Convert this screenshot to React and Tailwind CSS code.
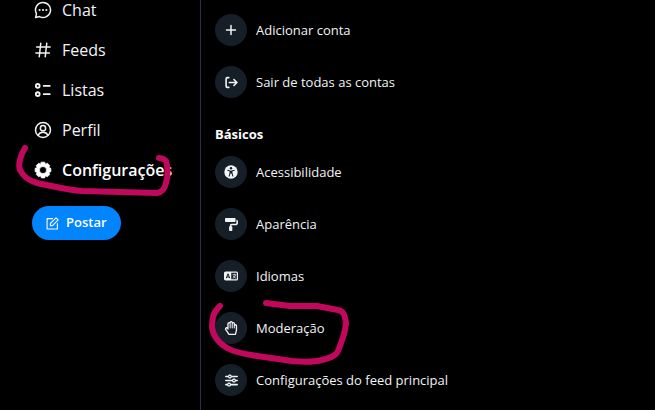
import React from 'react';
import { FaPaintRoller, FaRegHandPaper } from 'react-icons/fa';
import { FaSliders } from 'react-icons/fa6';

// ── Icons ───────────────────────────────────────────────────────────────────

function Icon({ className = 'size-[18px]', strokeWidth = 2, children }) {
  return (
    <svg
      viewBox="0 0 24 24"
      className={`shrink-0 ${className}`}
      fill="none"
      stroke="currentColor"
      strokeWidth={strokeWidth}
      strokeLinecap="round"
      strokeLinejoin="round"
      aria-hidden="true"
    >
      {children}
    </svg>
  );
}

const ChatIcon = () => (
  <Icon>
    <path d="M12 2a10 10 0 1 1-4.7 18.8L2.2 22l1.1-5.1A10 10 0 0 1 12 2Z" />
    <g fill="currentColor" stroke="none">
      <circle cx="7.5" cy="12" r="1.4" />
      <circle cx="12" cy="12" r="1.4" />
      <circle cx="16.5" cy="12" r="1.4" />
    </g>
  </Icon>
);

const HashIcon = () => (
  <Icon>
    <path d="M9 3 7 21M17 3l-2 18M3.5 8h18M2.5 16h18" />
  </Icon>
);

const ListIcon = () => (
  <Icon strokeWidth={2.4}>
    <circle cx="5" cy="6.5" r="2.5" />
    <circle cx="5" cy="17.5" r="2.5" />
    <path d="M13 6.5h8M13 17.5h8" />
  </Icon>
);

const ProfileIcon = () => (
  <Icon>
    <circle cx="12" cy="12" r="10" />
    <circle cx="12" cy="9.5" r="3.5" />
    <path d="M5.5 19c1.2-2.7 3.6-4 6.5-4s5.3 1.3 6.5 4" />
  </Icon>
);

const GearIcon = () => (
  <Icon>
    <path
      fill="currentColor"
      fillRule="evenodd"
      strokeWidth="1"
      d="M9.8 1.5h4.4l1 2.7 2.7-1.2 3.1 3.1-1.2 2.7 2.7 1v4.4l-2.7 1 1.2 2.7-3.1 3.1-2.7-1.2-1 2.7H9.8l-1-2.7-2.7 1.2L3 17.9l1.2-2.7-2.7-1V9.8l2.7-1L3 6.1 6.1 3l2.7 1.2ZM12 7.2a4.8 4.8 0 1 0 0 9.6 4.8 4.8 0 0 0 0-9.6Z"
    />
  </Icon>
);

const ComposeIcon = () => (
  <Icon className="size-[13px]">
    <path d="M12 3H2v19h19V12" />
    <path d="M8 16v-4L18.5 1.5l4 4L12 16Z" />
  </Icon>
);

const PlusIcon = () => (
  <Icon className="size-[12px]" strokeWidth={3}>
    <path d="M12 3v18M3 12h18" />
  </Icon>
);

const ExitIcon = () => (
  <Icon className="size-[13px]" strokeWidth={3}>
    <path d="M7 3H4.5Q2 3 2 5.5v13Q2 21 4.5 21H7M8 12h14M16.5 6.5l5.5 5.5-5.5 5.5" />
  </Icon>
);

const AccessIcon = () => (
  <svg viewBox="0 0 24 24" className="size-[14px]" fill="none" aria-hidden="true">
    <circle cx="12" cy="12" r="11.5" fill="currentColor" />
    <circle cx="12" cy="5.7" r="2.1" fill="#161e27" />
    <path
      d="M6.5 9.2 10.5 10.3v3.2L8.8 19M17.5 9.2l-4 1.1v3.2l1.7 5.5"
      stroke="#161e27"
      strokeWidth="1.8"
      strokeLinecap="round"
      strokeLinejoin="round"
    />
    <path d="M10 10h4v4.5h-4Z" fill="#161e27" />
  </svg>
);

const LanguageIcon = () => (
  <svg viewBox="0 0 28 20" className="h-[10px] w-[14px]" fill="none" aria-hidden="true">
    <rect x="1.2" y="2.2" width="25.6" height="15.6" rx="2" stroke="currentColor" strokeWidth="2.4" />
    <path d="M2 2h12.5v16H2Z" fill="currentColor" />
    <path d="M4.5 14.5 8 5.5l3.5 9M6 12h4" stroke="#161e27" strokeWidth="2" />
    <path
      d="M17 7.5h7.5M20.7 5.5v2M23 7.5c-.5 3-2.5 5.5-5.5 7M18.5 10c1 2 3 3.7 5.5 4.5"
      stroke="currentColor"
      strokeWidth="1.6"
    />
  </svg>
);

// ── Data ────────────────────────────────────────────────────────────────────

const NAV_ITEMS = [
  { label: 'Chat', icon: ChatIcon },
  { label: 'Feeds', icon: HashIcon },
  { label: 'Listas', icon: ListIcon },
  { label: 'Perfil', icon: ProfileIcon },
  { label: 'Configurações', icon: GearIcon, active: true },
];

const ACCOUNT_ITEMS = [
  { label: 'Adicionar conta', icon: <PlusIcon /> },
  { label: 'Sair de todas as contas', icon: <ExitIcon /> },
];

const BASIC_ITEMS = [
  { label: 'Acessibilidade', icon: <AccessIcon /> },
  { label: 'Aparência', icon: <FaPaintRoller className="size-[13px]" /> },
  { label: 'Idiomas', icon: <LanguageIcon /> },
  { label: 'Moderação', icon: <FaRegHandPaper className="size-[14px]" /> },
  { label: 'Configurações do feed principal', icon: <FaSliders className="size-[13px]" /> },
];

// ── Pieces ──────────────────────────────────────────────────────────────────

function SettingsRow({ label, icon }) {
  return (
    <li>
      <button type="button" className="flex h-[52px] w-full items-center gap-[9px] px-[14px] text-left">
        <span className="flex size-8 shrink-0 items-center justify-center rounded-full bg-[#161e27]">
          {icon}
        </span>
        <span className="text-[13px] leading-5">{label}</span>
      </button>
    </li>
  );
}

// Hand-drawn marker strokes laid over the page
function Marker({ className, viewBox, d }) {
  return (
    <svg
      viewBox={viewBox}
      className={`pointer-events-none absolute ${className}`}
      fill="none"
      stroke="#c2085c"
      strokeWidth="6"
      strokeLinecap="round"
      strokeLinejoin="round"
      aria-hidden="true"
    >
      <path d={d} />
    </svg>
  );
}

export default function App() {
  return (
    <div className="relative flex h-screen overflow-hidden bg-black font-['Open_Sans',sans-serif] text-[#f1f3f5]">
      {/* Sidebar, scrolled slightly past its first row */}
      <aside className="-mt-[10px] w-[200px] shrink-0">
        <nav>
          {NAV_ITEMS.map(({ label, icon: NavIcon, active }) => (
            <a
              key={label}
              href="#"
              className={`flex h-10 items-center gap-[10px] pl-[34px] text-base ${active ? 'font-semibold text-white' : ''}`}
            >
              <NavIcon />
              {label}
            </a>
          ))}
        </nav>
        <button
          type="button"
          className="mt-4 ml-8 flex h-[34px] items-center gap-[7px] rounded-full bg-[#0085ff] px-[14px] text-[13px] font-semibold text-white"
        >
          <ComposeIcon />
          Postar
        </button>
      </aside>

      <main className="min-w-0 flex-1 border-l border-[#2a3440] pt-1">
        <ul>
          {ACCOUNT_ITEMS.map((item) => (
            <SettingsRow key={item.label} {...item} />
          ))}
        </ul>
        <h2 className="px-[14px] pt-4 pb-[2px] text-[13px] leading-5 font-bold text-white">Básicos</h2>
        <ul>
          {BASIC_ITEMS.map((item) => (
            <SettingsRow key={item.label} {...item} />
          ))}
        </ul>
      </main>

      <Marker
        className="top-[140px] left-[10px] h-[60px] w-[170px]"
        viewBox="10 140 170 60"
        d="M25 148C20 156 18 165 20 170C23 176 30 181 37 183C52 186 68 190 82 191L157 193C163 192 165 188 166 183C168 176 168 168 166 161Q163 158 159 158"
      />
      <Marker
        className="top-[295px] left-[205px] h-[75px] w-[150px]"
        viewBox="205 295 150 75"
        d="M220 306C213 312 212 319 212 327C213 337 219 343 227 348C234 352 244 354 257 356L292 361C303 362 315 362 322 360C330 358 336 356 338 351C341 343 345 335 346 323C345 316 344 311 338 310L317 306L290 306L266 303"
      />
    </div>
  );
}
